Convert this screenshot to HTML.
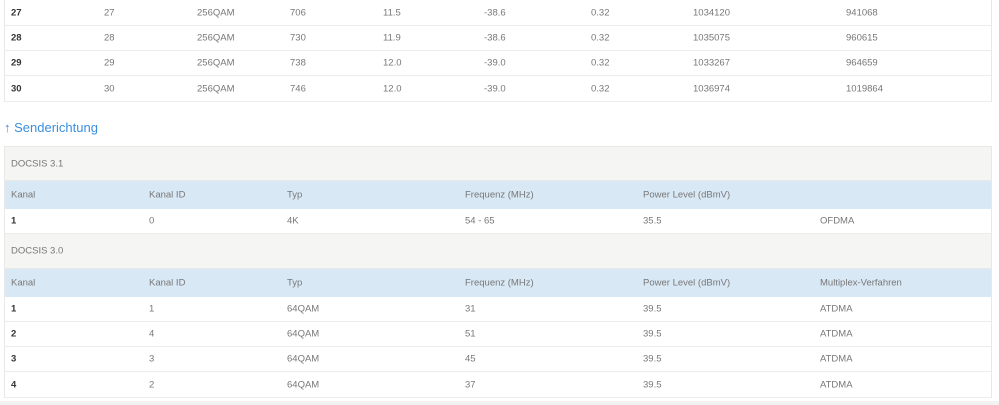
<!DOCTYPE html>
<html><head><style>
body{margin:0;width:999px;height:405px;background:#fff;font-family:"Liberation Sans",sans-serif;font-size:9.5px;color:#777;position:relative;overflow:hidden}
.r{position:absolute;left:4px;width:988px;border-left:1px solid #e8e8e8;border-right:1px solid #e8e8e8;box-sizing:border-box}
.r span{position:absolute;top:50%;transform:translateY(-50%);white-space:nowrap}
.b{border-bottom:1px solid #ececec}
.g{background:#f5f5f3;border-bottom:1px solid #e8e8e8}
.h{background:#d9e8f5}
.f{color:#333;font-weight:bold}
</style></head><body>
<div class="r b" style="top:0;height:26px"><span class="f" style="left:6px">27</span><span style="left:99px">27</span><span style="left:192px">256QAM</span><span style="left:285px">706</span><span style="left:378px">11.5</span><span style="left:479px">-38.6</span><span style="left:586px">0.32</span><span style="left:688px">1034120</span><span style="left:841px">941068</span></div>
<div class="r b" style="top:26px;height:25px"><span class="f" style="left:6px">28</span><span style="left:99px">28</span><span style="left:192px">256QAM</span><span style="left:285px">730</span><span style="left:378px">11.9</span><span style="left:479px">-38.6</span><span style="left:586px">0.32</span><span style="left:688px">1035075</span><span style="left:841px">960615</span></div>
<div class="r b" style="top:51px;height:25px"><span class="f" style="left:6px">29</span><span style="left:99px">29</span><span style="left:192px">256QAM</span><span style="left:285px">738</span><span style="left:378px">12.0</span><span style="left:479px">-39.0</span><span style="left:586px">0.32</span><span style="left:688px">1033267</span><span style="left:841px">964659</span></div>
<div class="r b" style="top:76px;height:26px"><span class="f" style="left:6px">30</span><span style="left:99px">30</span><span style="left:192px">256QAM</span><span style="left:285px">746</span><span style="left:378px">12.0</span><span style="left:479px">-39.0</span><span style="left:586px">0.32</span><span style="left:688px">1036974</span><span style="left:841px">1019864</span></div>
<div style="position:absolute;left:4px;top:120px;font-size:13px;color:#3b8ede">↑ Senderichtung</div>
<div class="r g" style="top:146px;height:35px;border-top:1px solid #e8e8e8"><span style="left:6px">DOCSIS 3.1</span></div>
<div class="r h" style="top:181px;height:28px"><span style="left:6px">Kanal</span><span style="left:144px">Kanal ID</span><span style="left:282px">Typ</span><span style="left:460px">Frequenz (MHz)</span><span style="left:638px">Power Level (dBmV)</span></div>
<div class="r b" style="top:209px;height:25px"><span class="f" style="left:6px">1</span><span style="left:144px">0</span><span style="left:282px">4K</span><span style="left:460px">54 - 65</span><span style="left:638px">35.5</span><span style="left:815px">OFDMA</span></div>
<div class="r g" style="top:234px;height:35px"><span style="left:6px">DOCSIS 3.0</span></div>
<div class="r h" style="top:269px;height:28px"><span style="left:6px">Kanal</span><span style="left:144px">Kanal ID</span><span style="left:282px">Typ</span><span style="left:460px">Frequenz (MHz)</span><span style="left:638px">Power Level (dBmV)</span><span style="left:815px">Multiplex-Verfahren</span></div>
<div class="r b" style="top:297px;height:25px"><span class="f" style="left:6px">1</span><span style="left:144px">1</span><span style="left:282px">64QAM</span><span style="left:460px">31</span><span style="left:638px">39.5</span><span style="left:815px">ATDMA</span></div>
<div class="r b" style="top:322px;height:25px"><span class="f" style="left:6px">2</span><span style="left:144px">4</span><span style="left:282px">64QAM</span><span style="left:460px">51</span><span style="left:638px">39.5</span><span style="left:815px">ATDMA</span></div>
<div class="r b" style="top:347px;height:25px"><span class="f" style="left:6px">3</span><span style="left:144px">3</span><span style="left:282px">64QAM</span><span style="left:460px">45</span><span style="left:638px">39.5</span><span style="left:815px">ATDMA</span></div>
<div class="r b" style="top:372px;height:26px"><span class="f" style="left:6px">4</span><span style="left:144px">2</span><span style="left:282px">64QAM</span><span style="left:460px">37</span><span style="left:638px">39.5</span><span style="left:815px">ATDMA</span></div>
<div style="position:absolute;left:0;top:401px;width:999px;height:4px;background:#f2f2f2"></div>
</body></html>
